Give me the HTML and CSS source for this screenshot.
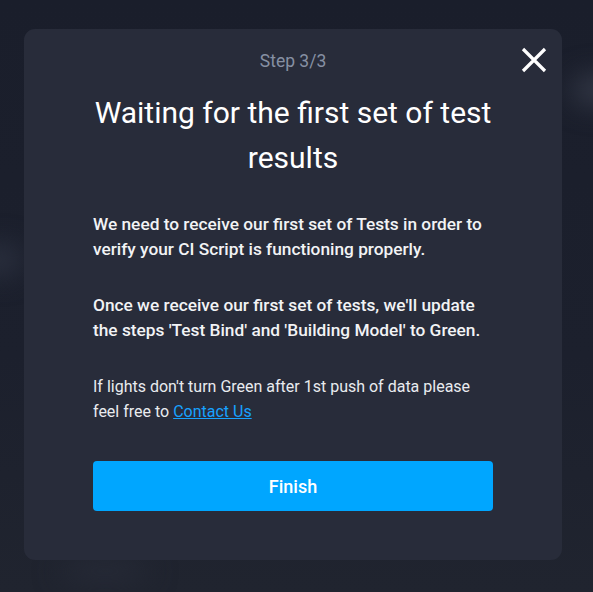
FILE: index.html
```html
<!DOCTYPE html>
<html>
<head>
<meta charset="utf-8">
<link rel="stylesheet" href="styles.css">
</head>
<body>
<div class="backdrop">
  <div class="blob b1"></div>
  <div class="blob b2"></div>
  <div class="blob b3"></div>
  <div class="modal">
    <button class="close" aria-label="Close">
      <svg width="26" height="26" viewBox="0 0 26 26"><path d="M2 2 L24 24 M24 2 L2 24" stroke="#fff" stroke-width="3.2" stroke-linecap="butt"/></svg>
    </button>
    <div class="step">Step 3/3</div>
    <h1 class="title">Waiting for the first set of test results</h1>
    <p class="lead">We need to receive our first set of Tests in order to verify your CI Script is functioning properly.</p>
    <p class="lead">Once we receive our first set of tests, we'll update the steps 'Test Bind' and 'Building Model' to Green.</p>
    <p class="note">If lights don't turn Green after 1st push of data please feel free to <a href="#">Contact Us</a></p>
    <button class="finish">Finish</button>
  </div>
</div>
</body>
</html>
```
FILE: styles.css
```css
html, body {
  margin: 0;
  padding: 0;
}
body {
  background: #1b1f2c;
  font-family: Roboto, "Liberation Sans", sans-serif;
  width: 593px;
  height: 592px;
  overflow: hidden;
}
.backdrop {
  position: relative;
  width: 593px;
  height: 592px;
  overflow: hidden;
  padding: 29px 0 0 24px;
  box-sizing: border-box;
  background: linear-gradient(180deg, #1a1e2b 0%, #1c202d 60%, #20242f 100%);
}
.blob {
  position: absolute;
  border-radius: 50%;
  filter: blur(14px);
  background: #2c3140;
}
.b1 { left: -30px; top: 245px; width: 55px; height: 30px; }
.b2 { left: 570px; top: 75px; width: 60px; height: 30px; background: #353a48; }
.b3 { left: 60px; top: 560px; width: 90px; height: 22px; background: #272b38; }
.modal {
  position: relative;
  width: 538px;
  height: 531px;
  box-sizing: border-box;
  background: #282c3a;
  border-radius: 11px;
  padding: 21.5px 69px 0;
  display: flex;
  flex-direction: column;
  align-items: stretch;
}
.close {
  position: absolute;
  right: 15px;
  top: 18px;
  background: none;
  border: 0;
  padding: 0;
  width: 26px;
  height: 26px;
  cursor: pointer;
}
.close svg { display: block; }
.step {
  text-align: center;
  color: #8690a3;
  font-size: 17.5px;
  line-height: 20px;
}
.title {
  margin: 19.5px 0 0;
  text-align: center;
  color: #ffffff;
  font-size: 30px;
  font-weight: 400;
  line-height: 45px;
}
.lead {
  margin: 0;
  color: #f2f3f5;
  font-size: 17.3px;
  font-weight: 500;
  line-height: 25px;
}
.title + .lead { margin-top: 31.5px; }
.lead + .lead { margin-top: 31px; }
.note {
  margin: 31px 0 0;
  color: #e9ebef;
  font-size: 16px;
  line-height: 25px;
}
.note a {
  color: #17a2ff;
}
.finish {
  margin-top: 37.5px;
  height: 50px;
  border: 0;
  border-radius: 4px;
  background: #00a6ff;
  color: #ffffff;
  font-family: Roboto, "Liberation Sans", sans-serif;
  font-size: 18px;
  font-weight: 500;
}
```
